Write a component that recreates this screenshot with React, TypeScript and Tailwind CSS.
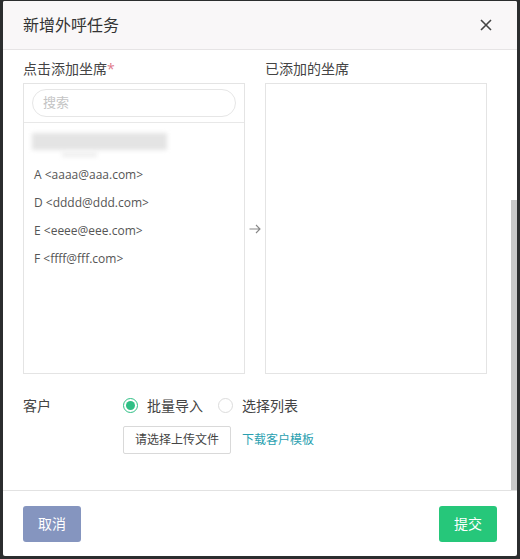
import { useState } from "react";

const agents = ["A <aaaa@aaa.com>", "D <dddd@ddd.com>", "E <eeee@eee.com>", "F <ffff@fff.com>"];

export default function App() {
  const [mode, setMode] = useState<"batch" | "list">("batch");

  return (
    <div
      className="w-[520px] h-[559px] bg-[#2b2d2e] pl-[3px] pr-[3px] pt-[1px] pb-[3px]"
      style={{ fontFamily: '"Open Sans", "Noto Sans CJK SC", sans-serif' }}
    >
      <div className="h-full bg-white rounded-[2px] flex flex-col overflow-hidden">
        {/* header */}
        <div className="h-[49px] shrink-0 bg-[#f9f7f8] border-b border-[#e6e4e5] flex items-center justify-between pl-[20px] pr-[24px]">
          <span className="text-[16px] text-[#333]">新增外呼任务</span>
          <svg width="14" height="14" viewBox="0 0 14 14" className="text-[#444]">
            <path d="M2 2 L12 12 M12 2 L2 12" stroke="currentColor" strokeWidth="1.6" />
          </svg>
        </div>

        {/* body */}
        <div className="flex-1 flex min-h-0">
          <div className="flex-1 pl-[20px] pr-[24px]">
            <div className="flex pt-[10px]">
              <div className="w-[222px]">
                <div className="text-[14px] text-[#444] h-[23px] leading-[17px]">
                  点击添加坐席<span className="text-[#e07a8a]">*</span>
                </div>
                <div className="h-[291px] border border-[#e4e4e4] flex flex-col">
                  <div className="px-[8px] pt-[5px] pb-[5px] border-b border-[#e8e8e8]">
                    <div className="h-[28px] rounded-full border border-[#e6e6e6] px-[10px] flex items-center text-[13px] text-[#c4c4c4]">
                      搜索
                    </div>
                  </div>
                  <div className="pl-[10px] pt-[10px]">
                    <div className="relative h-[28px]">
                      <div className="absolute left-[-2px] top-0 w-[135px] h-[17px] bg-[#e4e4e4] blur-[2px]" />
                      <div className="absolute left-[28px] top-[19px] w-[35px] h-[5px] bg-[#eeeeee] blur-[2px]" />
                    </div>
                    {agents.map(a => (
                      <div key={a} className="h-[28px] leading-[28px] text-[12px] text-[#555]">{a}</div>
                    ))}
                  </div>
                </div>
              </div>
              <div className="w-[20px] flex items-center justify-center pt-[23px]">
                <svg width="12" height="10" viewBox="0 0 12 10" className="text-[#888]">
                  <path d="M0.5 5 H11 M7 1 L11 5 L7 9" fill="none" stroke="currentColor" strokeWidth="1.1" />
                </svg>
              </div>
              <div className="w-[222px]">
                <div className="text-[14px] text-[#444] h-[23px] leading-[17px]">已添加的坐席</div>
                <div className="h-[291px] border border-[#e4e4e4]" />
              </div>
            </div>

            <div className="flex items-center mt-[22px] h-[18px] text-[14px] text-[#444]">
              <span className="w-[100px]">客户</span>
              <label className="flex items-center cursor-pointer" onClick={() => setMode("batch")}>
                <span className={`w-[15px] h-[15px] rounded-full border flex items-center justify-center ${mode === "batch" ? "border-[#2fbf85]" : "border-[#dcdcdc]"}`}>
                  {mode === "batch" && <span className="w-[9px] h-[9px] rounded-full bg-[#2fbf85]" />}
                </span>
                <span className="ml-[9px]">批量导入</span>
              </label>
              <label className="flex items-center ml-[15px] cursor-pointer" onClick={() => setMode("list")}>
                <span className={`w-[15px] h-[15px] rounded-full border flex items-center justify-center ${mode === "list" ? "border-[#2fbf85]" : "border-[#dcdcdc]"}`}>
                  {mode === "list" && <span className="w-[9px] h-[9px] rounded-full bg-[#2fbf85]" />}
                </span>
                <span className="ml-[9px]">选择列表</span>
              </label>
            </div>

            <div className="flex items-center mt-[12px] ml-[100px]">
              <button className="h-[28px] px-[11px] border border-[#d9d9d9] rounded-[2px] text-[12px] text-[#444] bg-white">
                请选择上传文件
              </button>
              <a className="ml-[11px] text-[12px] text-[#2a9fb0]">下载客户模板</a>
            </div>
          </div>
          {/* scrollbar */}
          <div className="w-[6px] flex flex-col pt-[150px]">
            <div className="flex-1 bg-[#c8c8c8]" />
          </div>
        </div>

        {/* footer */}
        <div className="h-[66px] shrink-0 border-t border-[#e2e2e2] flex items-center justify-between pl-[20px] pr-[20px]">
          <button className="w-[58px] h-[36px] rounded-[3px] bg-[#8595bf] text-white text-[14px]">取消</button>
          <button className="w-[58px] h-[36px] rounded-[3px] bg-[#26c77a] text-white text-[14px]">提交</button>
        </div>
      </div>
    </div>
  );
}
